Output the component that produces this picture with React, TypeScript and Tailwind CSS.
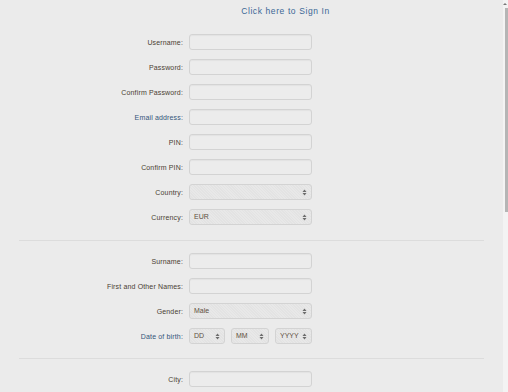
import React from "react";

const font = { fontFamily: '"Liberation Sans", Arial, sans-serif' };

function Arrows() {
  return (
    <svg width="5" height="7" viewBox="0 0 5 7" className="shrink-0">
      <path d="M0.5 3 L2.5 0.5 L4.5 3 Z" fill="#6b6b6b" />
      <path d="M0.5 4 L2.5 6.5 L4.5 4 Z" fill="#6b6b6b" />
    </svg>
  );
}

const hatch =
  "bg-[repeating-linear-gradient(45deg,#e3e3e3_0px,#e3e3e3_1px,#e8e8e8_1px,#e8e8e8_2px)]";

function Input() {
  return (
    <div className="w-[123px] h-[16px] rounded-[3px] border border-[#d3d3d3] bg-[#ececec] shadow-[inset_0_1px_1px_rgba(0,0,0,0.04)]" />
  );
}

function Select({ value, w = "w-[123px]" }: { value?: string; w?: string }) {
  return (
    <div
      className={`${w} h-[16px] rounded-[3px] border border-[#d3d3d3] ${hatch} flex items-center justify-between pl-[4px] pr-[4px] text-[7px] text-[#5e5042]`}
    >
      <span>{value ?? ""}</span>
      <Arrows />
    </div>
  );
}

function Row({
  label,
  blue,
  children,
}: {
  label: string;
  blue?: boolean;
  children: React.ReactNode;
}) {
  return (
    <div className="flex items-center h-[16px]">
      <div
        className={`w-[183px] text-right text-[7px] leading-[9px] tracking-[0.15px] ${
          blue ? "text-[#34557a]" : "text-[#4a3e33]"
        }`}
      >
        {label}
      </div>
      <div className="ml-[6px] flex gap-[6px]">{children}</div>
    </div>
  );
}

export default function App() {
  return (
    <div className="w-[508px] h-[392px] overflow-hidden bg-[#ebebeb] flex" style={font}>
      <div className="w-[503px] flex flex-col">
        <div className="pt-[7px] h-[16px] text-[8.5px] leading-[9px] text-[#3b6796] font-medium tracking-[0.6px] flex justify-center pl-[68px]">
          Click here to Sign In
        </div>
        <div className="mt-[18px] flex flex-col gap-[9px]">
          <Row label="Username:"><Input /></Row>
          <Row label="Password:"><Input /></Row>
          <Row label="Confirm Password:"><Input /></Row>
          <Row label="Email address:" blue><Input /></Row>
          <Row label="PIN:"><Input /></Row>
          <Row label="Confirm PIN:"><Input /></Row>
          <Row label="Country:"><Select /></Row>
          <Row label="Currency:"><Select value="EUR" /></Row>
        </div>
        <div className="mx-[19px] mt-[15px] h-px bg-[#dcdcdc]" />
        <div className="mt-[12px] flex flex-col gap-[9px]">
          <Row label="Surname:"><Input /></Row>
          <Row label="First and Other Names:"><Input /></Row>
          <Row label="Gender:"><Select value="Male" /></Row>
          <Row label="Date of birth:" blue>
            <Select value="DD" w="w-[36px]" />
            <Select value="MM" w="w-[38px]" />
            <Select value="YYYY" w="w-[37px]" />
          </Row>
        </div>
        <div className="mx-[19px] mt-[14px] h-px bg-[#dcdcdc]" />
        <div className="mt-[12px] flex flex-col gap-[9px]">
          <Row label="City:"><Input /></Row>
        </div>
      </div>
      <div className="w-[5px] h-full bg-[#f3f3f3] flex flex-col items-end">
        <div className="h-[8px] w-full flex justify-end items-center pr-[1px]">
          <div className="w-0 h-0 border-l-[2px] border-r-[2px] border-b-[2px] border-l-transparent border-r-transparent border-b-[#777]" />
        </div>
        <div className="w-[3px] h-[204px] bg-[#b5b5b5]" />
      </div>
    </div>
  );
}
